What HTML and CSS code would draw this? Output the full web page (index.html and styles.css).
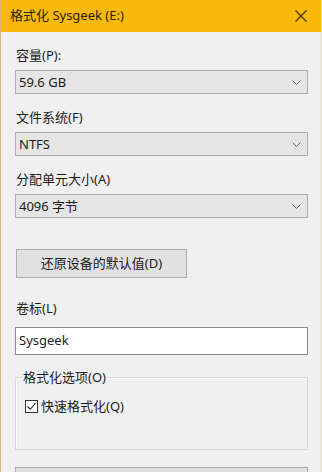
FILE: index.html
```html
<!DOCTYPE html>
<html lang="zh-CN">
<head>
    <meta charset="UTF-8">
    <meta name="viewport" content="width=device-width, initial-scale=1.0">
    <title>格式化 Sysgeek (E:)</title>
    <link rel="stylesheet" href="styles.css">
</head>
<body>
    <div class="window">
        <div class="titlebar">
            <span class="title">格式化 Sysgeek (E:)</span>
            <svg class="close" width="12" height="12" viewBox="0 0 12 12">
                <path d="M0.5 0.5 L11.5 11.5 M11.5 0.5 L0.5 11.5" stroke="#3a2e05" stroke-width="1.1" fill="none"/>
            </svg>
        </div>

        <div class="content">
            <div class="label first">容量(P):</div>
            <div class="combo">
                <span>59.6 GB</span>
                <svg class="chevron" width="9" height="5" viewBox="0 0 9 5"><path d="M0.5 0.5 L4.5 4.5 L8.5 0.5" stroke="#606060" fill="none"/></svg>
            </div>

            <div class="label">文件系统(F)</div>
            <div class="combo">
                <span>NTFS</span>
                <svg class="chevron" width="9" height="5" viewBox="0 0 9 5"><path d="M0.5 0.5 L4.5 4.5 L8.5 0.5" stroke="#606060" fill="none"/></svg>
            </div>

            <div class="label">分配单元大小(A)</div>
            <div class="combo">
                <span>4096 字节</span>
                <svg class="chevron" width="9" height="5" viewBox="0 0 9 5"><path d="M0.5 0.5 L4.5 4.5 L8.5 0.5" stroke="#606060" fill="none"/></svg>
            </div>

            <button type="button" class="button">还原设备的默认值(D)</button>

            <div class="label volume">卷标(L)</div>
            <div class="textbox">Sysgeek</div>

            <fieldset class="group">
                <legend>格式化选项(O)</legend>
                <div class="check-row">
                    <span class="checkbox">
                        <svg width="11" height="11" viewBox="0 0 11 11"><path d="M1.5 5.5 L4.3 8.3 L9.5 2.2" stroke="#222" stroke-width="1.1" fill="none"/></svg>
                    </span>
                    <span>快速格式化(Q)</span>
                </div>
            </fieldset>

            <div class="start-button"></div>
        </div>
    </div>
</body>
</html>
```

FILE: styles.css
```css
body {
    margin: 0;
    font-family: "Noto Sans", "Noto Sans CJK SC", sans-serif;
    font-size: 13px;
    color: #1b1b1b;
    background-color: #f0f0f0;
}

.window {
    width: 322px;
    height: 472px;
    box-sizing: border-box;
    background-color: #f0f0f0;
    border-left: 1px solid #d8b774;
    border-right: 1px solid #e4dcc8;
    overflow: hidden;
}

.titlebar {
    height: 32px;
    background-color: #f8b90c;
    display: flex;
    align-items: center;
    justify-content: space-between;
    padding: 0 14px 0 9px;
}

.title {
    color: #2a2205;
    line-height: 17px;
    padding-bottom: 2px;
}

.close {
    display: block;
}

.content {
    padding: 0 13px 0 14px;
}

.label {
    line-height: 17px;
    margin-top: 15px;
    margin-bottom: 6px;
    padding-left: 1px;
}

.label.first {
    margin-top: 15px;
}

.combo {
    height: 24px;
    box-sizing: border-box;
    border: 1px solid #adadad;
    background-color: #e5e5e5;
    display: flex;
    align-items: center;
    justify-content: space-between;
    padding: 0 6px 0 3px;
    line-height: 17px;
}

.chevron {
    display: block;
}

.button {
    display: block;
    margin-top: 31px;
    margin-left: 1px;
    width: 171px;
    height: 29px;
    border: 1px solid #adadad;
    background-color: #e1e1e1;
    font-family: inherit;
    font-size: 13px;
    color: #1b1b1b;
    padding: 0;
    line-height: 17px;
}

.label.volume {
    margin-top: 22px;
    margin-bottom: 10px;
}

.textbox {
    height: 28px;
    box-sizing: border-box;
    border: 1px solid #8a8a8a;
    background-color: #ffffff;
    padding: 0 3px;
    line-height: 25px;
}

.group {
    margin: 14px 0 0 0;
    padding: 0 6px;
    height: 81px;
    box-sizing: border-box;
    border: 1px solid #d9d9d9;
    box-shadow: inset 1px 1px 0 #fafafa;
}

.group legend {
    padding: 0 1px;
    line-height: 17px;
}

.check-row {
    display: flex;
    align-items: center;
    gap: 3px;
    margin-top: 12px;
    margin-left: 3px;
    line-height: 17px;
}

.checkbox {
    width: 13px;
    height: 13px;
    box-sizing: border-box;
    border: 1px solid #333;
    background-color: #ffffff;
    display: flex;
    align-items: center;
    justify-content: center;
}

.checkbox svg {
    display: block;
}

.start-button {
    margin-top: 17px;
    height: 24px;
    border: 1px solid #adadad;
    background-color: #e1e1e1;
}
```
